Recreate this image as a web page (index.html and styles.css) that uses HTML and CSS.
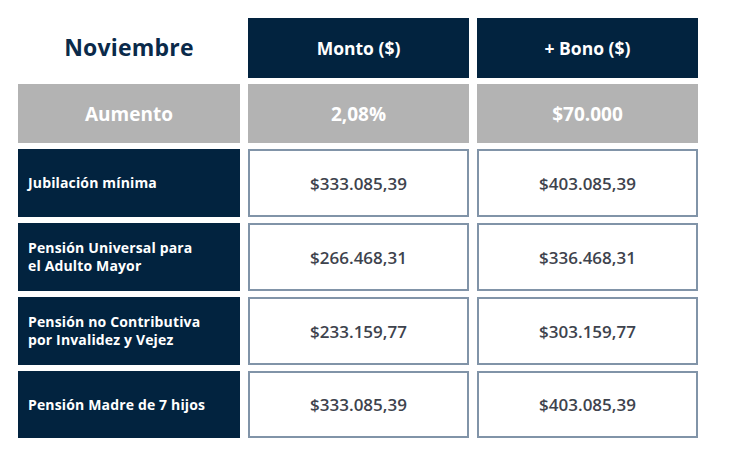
FILE: index.html
```html
<!DOCTYPE html>
<html lang="es">
<head>
<meta charset="utf-8">
<title>Noviembre</title>
<link rel="stylesheet" href="styles.css">
</head>
<body>
<div class="table">
  <div class="cell title">Noviembre</div>
  <div class="cell head">Monto ($)</div>
  <div class="cell head">+ Bono ($)</div>

  <div class="cell gray big">Aumento</div>
  <div class="cell gray">2,08%</div>
  <div class="cell gray">$70.000</div>

  <div class="cell label">Jubilación mínima</div>
  <div class="cell value">$333.085,39</div>
  <div class="cell value">$403.085,39</div>

  <div class="cell label">Pensión Universal para<br>el Adulto Mayor</div>
  <div class="cell value">$266.468,31</div>
  <div class="cell value">$336.468,31</div>

  <div class="cell label">Pensión no Contributiva<br>por Invalidez y Vejez</div>
  <div class="cell value">$233.159,77</div>
  <div class="cell value">$303.159,77</div>

  <div class="cell label">Pensión Madre de 7 hijos</div>
  <div class="cell value">$333.085,39</div>
  <div class="cell value">$403.085,39</div>
</div>
</body>
</html>
```
FILE: styles.css
```css
html, body {
  margin: 0;
  padding: 0;
  background: #ffffff;
}
body {
  padding: 18px 0 0 18px;
  font-family: "Open Sans", "Noto Sans", sans-serif;
}
.table {
  display: grid;
  grid-template-columns: 222px 221px 221px;
  grid-template-rows: 60px 59px 68px 68px 68px 67px;
  column-gap: 8px;
  row-gap: 6px;
}
.cell {
  box-sizing: border-box;
  display: flex;
  align-items: center;
  justify-content: center;
  text-align: center;
}
.title {
  color: #0a2a4a;
  font-size: 23px;
  font-weight: 700;
  letter-spacing: 0.2px;
  padding-bottom: 2px;
}
.head {
  background: #02233f;
  color: #ffffff;
  font-size: 17.5px;
  font-weight: 700;
}
.gray {
  background: #b3b3b3;
  color: #ffffff;
  font-size: 19px;
  font-weight: 700;
}
.label {
  background: #02233f;
  color: #ffffff;
  font-size: 14px;
  font-weight: 700;
  line-height: 18px;
  letter-spacing: 0.15px;
  justify-content: flex-start;
  text-align: left;
  padding-left: 10px;
}
.value {
  background: #ffffff;
  border: 2px solid #8194a8;
  color: #3e434d;
  font-size: 17px;
  font-weight: 600;
}
```
